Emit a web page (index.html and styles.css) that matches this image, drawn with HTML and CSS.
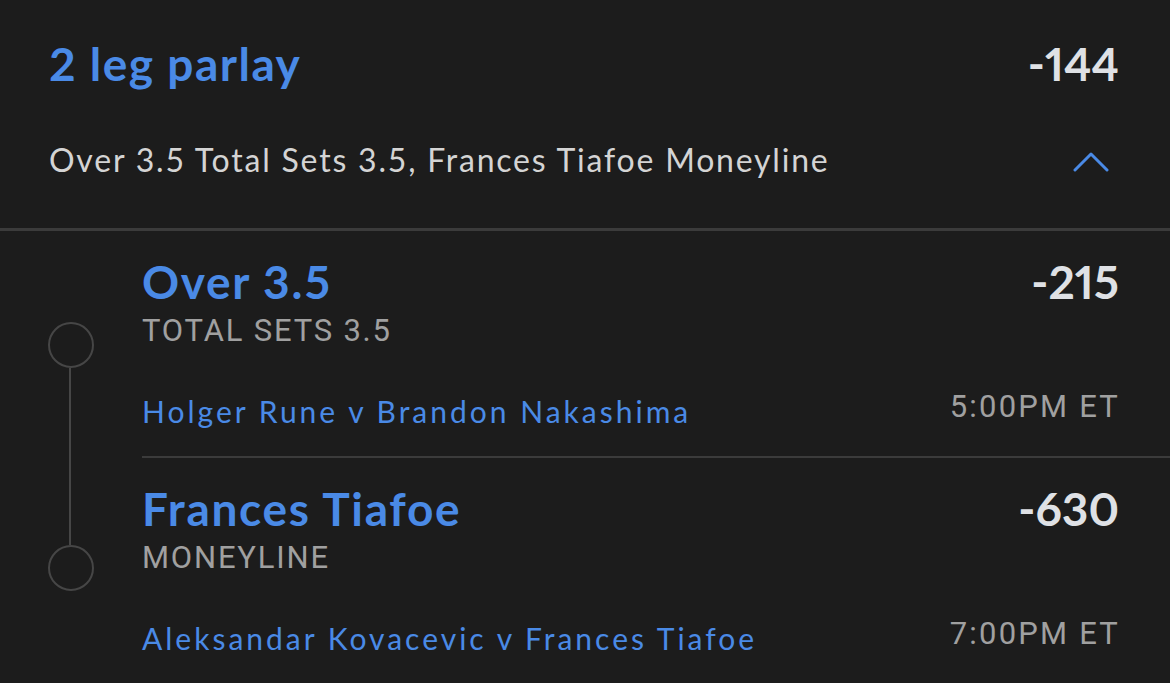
FILE: index.html
```html
<!DOCTYPE html>
<html>
<head>
<meta charset="utf-8">
<link rel="stylesheet" href="styles.css">
</head>
<body>
<div class="card">
  <section class="parlay">
    <div class="parlay-top">
      <div class="parlay-title">2 leg parlay</div>
      <div class="odds">-144</div>
    </div>
    <div class="parlay-summary">
      <div class="summary-text">Over 3.5 Total Sets 3.5, Frances Tiafoe Moneyline</div>
      <svg class="chevron" width="36" height="22" viewBox="0 0 36 22"><polyline points="2,19 18,3 34,19" fill="none" stroke="#4a8ae6" stroke-width="3" stroke-linecap="round" stroke-linejoin="round"/></svg>
    </div>
  </section>
  <div class="legs">
    <div class="leg leg-first">
      <div class="rail rail-first"><span class="dot"></span><span class="wire"></span></div>
      <div class="leg-body">
        <div class="leg-top">
          <div class="leg-name">Over 3.5</div>
          <div class="odds">-215</div>
        </div>
        <div class="leg-market">TOTAL SETS 3.5</div>
        <div class="leg-bottom">
          <div class="match">Holger Rune v Brandon Nakashima</div>
          <div class="time">5:00PM ET</div>
        </div>
      </div>
    </div>
    <div class="leg leg-second">
      <div class="rail rail-second"><span class="wire"></span><span class="dot"></span></div>
      <div class="leg-body">
        <div class="leg-top">
          <div class="leg-name">Frances Tiafoe</div>
          <div class="odds">-630</div>
        </div>
        <div class="leg-market">MONEYLINE</div>
        <div class="leg-bottom">
          <div class="match">Aleksandar Kovacevic v Frances Tiafoe</div>
          <div class="time">7:00PM ET</div>
        </div>
      </div>
    </div>
  </div>
</div>
</body>
</html>
```

FILE: styles.css
```css
html, body {
  margin: 0;
  padding: 0;
  background: #1c1c1c;
}
body {
  width: 1170px;
  height: 683px;
  overflow: hidden;
  font-family: Lato, "Open Sans", sans-serif;
}
.card {
  display: flex;
  flex-direction: column;
}
.parlay {
  padding: 36px 51px 0 49px;
  height: 192px;
  border-bottom: 3px solid #3b3b3b;
}
.parlay-top {
  display: flex;
  justify-content: space-between;
  align-items: baseline;
  height: 56px;
  line-height: 56px;
}
.parlay-title {
  color: #4a8ae6;
  font-weight: 700;
  font-size: 46px;
  letter-spacing: 1.5px;
}
.odds {
  color: #dfe1e5;
  font-weight: 700;
  font-size: 46px;
  font-variant-numeric: proportional-nums;
}
.parlay-summary {
  margin-top: 47px;
  display: flex;
  justify-content: space-between;
  align-items: center;
  height: 40px;
}
.summary-text {
  color: #d4d4d4;
  font-size: 32px;
  font-weight: 400;
  letter-spacing: 1.8px;
}
.chevron {
  margin-right: 10px;
  margin-top: 6px;
}
.legs {
  display: flex;
  flex-direction: column;
}
.leg {
  display: flex;
}
.rail {
  width: 142px;
  flex: none;
  display: flex;
  flex-direction: column;
}
.rail .dot {
  width: 42px;
  height: 42px;
  border: 2px solid #464646;
  border-radius: 50%;
  flex: none;
  margin-left: 48px;
}
.rail .wire {
  width: 2px;
  background: #464646;
  flex: 1;
  margin-left: 69px;
}
.rail-first {
  padding-top: 91px;
}
.rail-second {
  padding-bottom: 90px;
}
.leg-body {
  flex: 1;
  padding-right: 51px;
}
.leg-first .leg-body {
  border-bottom: 2px solid #3b3b3b;
  height: 225px;
}
.leg-second .leg-body {
  height: 223px;
}
.leg-top {
  display: flex;
  justify-content: space-between;
  align-items: baseline;
  padding-top: 24px;
  height: 54px;
  line-height: 54px;
}
.leg-name {
  color: #4a8ae6;
  font-weight: 700;
  font-size: 46px;
  letter-spacing: 1.7px;
}
.leg-market {
  color: #a0a0a0;
  font-family: Roboto, sans-serif;
  font-size: 31px;
  letter-spacing: 1.8px;
  line-height: 40px;
  margin-top: 2px;
}
.leg-bottom {
  margin-top: 40px;
  display: flex;
  justify-content: space-between;
  align-items: flex-start;
}
.match {
  color: #4a8ae6;
  font-size: 30px;
  letter-spacing: 3px;
  line-height: 40px;
}
.time {
  color: #a0a0a0;
  font-family: Roboto, sans-serif;
  font-size: 31px;
  letter-spacing: 2.2px;
  line-height: 32px;
  margin-right: -1px;
}
```
